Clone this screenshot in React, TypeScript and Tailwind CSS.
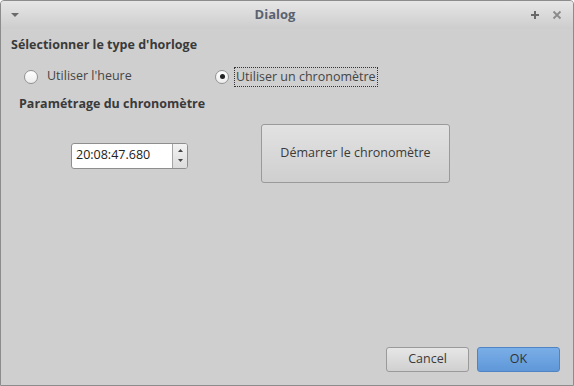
import React from 'react';

const Radio = ({ checked }: { checked?: boolean }) => (
  <span className="w-[14px] h-[14px] rounded-full border border-[#939393] bg-gradient-to-b from-white to-[#ededed] flex items-center justify-center shrink-0">
    {checked && <span className="w-[5px] h-[5px] rounded-full bg-[#222]" />}
  </span>
);

export default function App() {
  return (
    <div className="w-[574px] h-[386px] flex flex-col bg-[#cfcfcf] border border-[#8c8c8c] rounded-t-[4px] overflow-hidden text-[12.5px] text-[#3a3a3a]" style={{ fontFamily: '"Open Sans", "Noto Sans", sans-serif' }}>
      {/* Title bar */}
      <div className="h-[28px] shrink-0 flex items-center px-[8px] bg-gradient-to-b from-[#e6e6e6] to-[#cdcdcd] relative">
        <svg width="10" height="6" viewBox="0 0 10 6" className="ml-[1px]">
          <path d="M1 1 L9 1 L5 5 Z" fill="#6a6a6a" />
        </svg>
        <span className="flex-1 text-center font-bold text-[#5a6270] text-[13px]">Dialog</span>
        <div className="flex items-center gap-[12px] mr-[3px]">
          <svg width="10" height="10" viewBox="0 0 10 10">
            <path d="M5 1 V9 M1 5 H9" stroke="#6a6a6a" strokeWidth="2" />
          </svg>
          <svg width="10" height="10" viewBox="0 0 10 10">
            <path d="M1.5 1.5 L8.5 8.5 M8.5 1.5 L1.5 8.5" stroke="#8a8a8a" strokeWidth="1.8" />
          </svg>
        </div>
      </div>

      {/* Body */}
      <div className="flex-1 flex flex-col px-[10px] pt-[7px] pb-[13px]">
        <div className="font-bold text-[#3a3a3a]">Sélectionner le type d'horloge</div>
        <div className="flex items-center mt-[12px] pl-[13px]">
          <div className="flex items-center gap-[9px] w-[191px]">
            <Radio />
            <span className="text-[#454545]">Utiliser l'heure</span>
          </div>
          <div className="flex items-center gap-[5px]">
            <Radio checked />
            <span className="text-[#454545] border border-dotted border-[#333] px-[1px] leading-[18px]">Utiliser un chronomètre</span>
          </div>
        </div>
        <div className="font-bold text-[#3a3a3a] mt-[8px] pl-[8px]">Paramétrage du chronomètre</div>

        <div className="flex items-start mt-[10px]">
          <div className="ml-[60px] mt-[19px] w-[117px] h-[26px] flex border border-[#8e8e8e] rounded-[3px] bg-white overflow-hidden">
            <div className="flex-1 flex items-center pl-[4px] text-[#222]">20:08:47.680</div>
            <div className="w-[15px] border-l border-[#a5a5a5] bg-gradient-to-b from-[#f2f2f2] to-[#dcdcdc] flex flex-col items-center justify-center gap-[7px]">
              <svg width="5" height="3" viewBox="0 0 5 3"><path d="M0 3 L2.5 0 L5 3 Z" fill="#444" /></svg>
              <svg width="5" height="3" viewBox="0 0 5 3"><path d="M0 0 L5 0 L2.5 3 Z" fill="#444" /></svg>
            </div>
          </div>
          <button className="ml-[73px] w-[189px] h-[59px] border border-[#9a9a9a] rounded-[3px] bg-gradient-to-b from-[#e2e2e2] to-[#cfcfcf] text-[#3a3a3a]">
            Démarrer le chronomètre
          </button>
        </div>

        <div className="flex-1" />
        <div className="flex justify-end gap-[8px] pr-[3px]">
          <button className="w-[83px] h-[25px] border border-[#9a9a9a] rounded-[3px] bg-gradient-to-b from-[#e6e6e6] to-[#d0d0d0] text-[#3a3a3a]">Cancel</button>
          <button className="w-[83px] h-[25px] border border-[#4f84c4] rounded-[3px] bg-gradient-to-b from-[#7aaee8] to-[#5f97d8] text-[#333]">OK</button>
        </div>
      </div>
    </div>
  );
}
